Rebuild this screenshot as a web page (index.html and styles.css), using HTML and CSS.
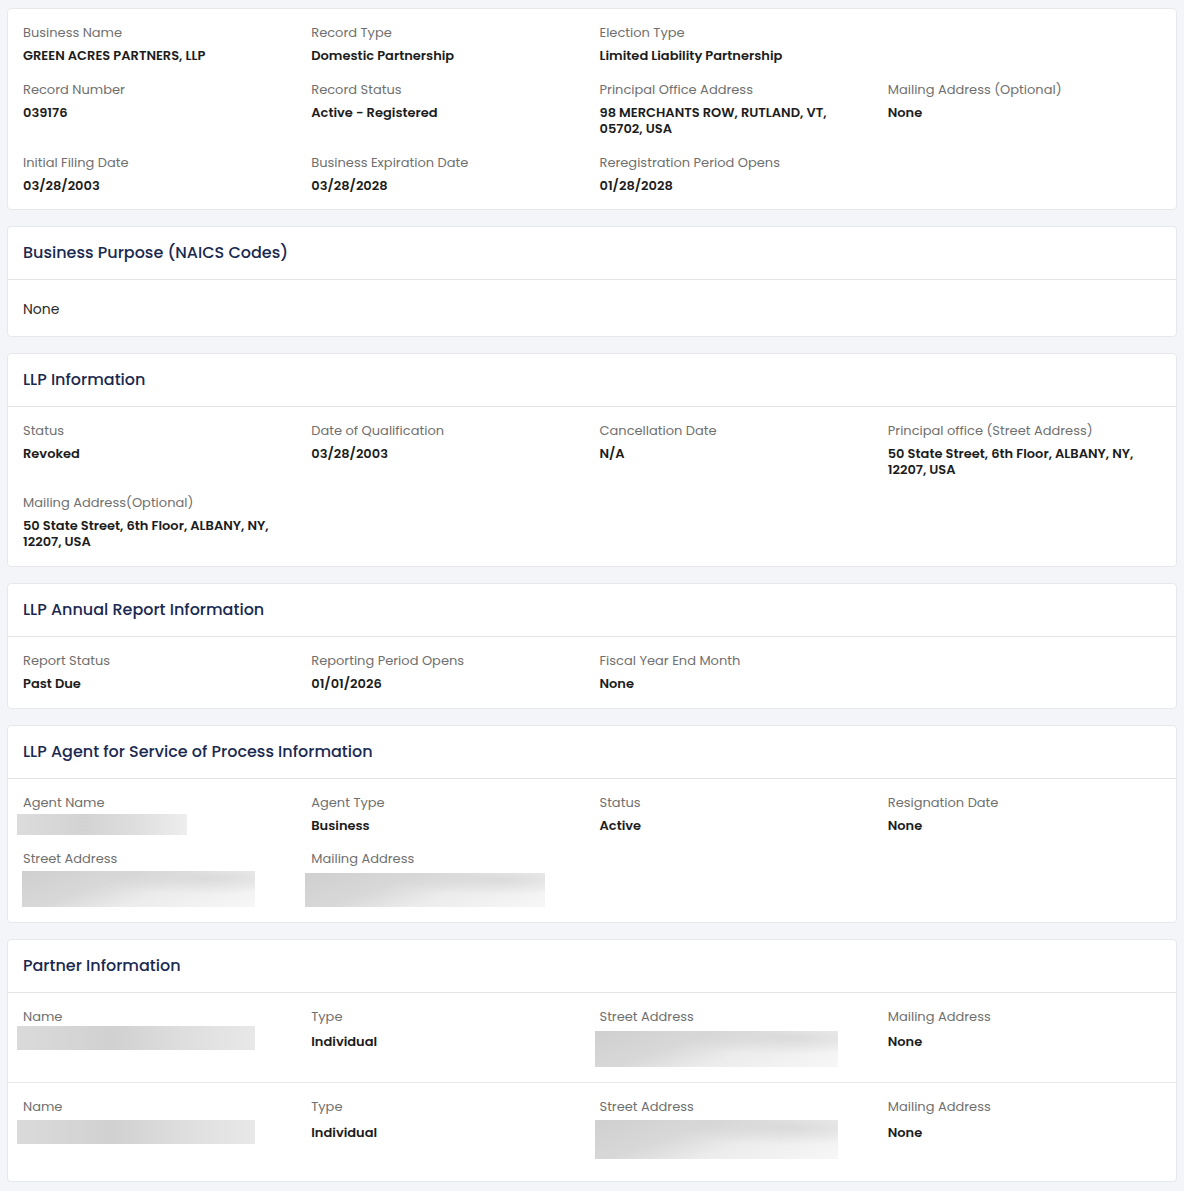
FILE: index.html
```html
<!DOCTYPE html>
<html lang="en">
<head>
    <meta charset="UTF-8">
    <meta name="viewport" content="width=device-width, initial-scale=1.0">
    <title>Business Record - GREEN ACRES PARTNERS, LLP</title>
    <link rel="stylesheet" href="styles.css">
</head>
<body>
    <!-- Record summary -->
    <div class="card">
        <div class="card-body grid summary">
            <div class="field">
                <span class="label">Business Name</span>
                <span class="value">GREEN ACRES PARTNERS, LLP</span>
            </div>
            <div class="field">
                <span class="label">Record Type</span>
                <span class="value">Domestic Partnership</span>
            </div>
            <div class="field">
                <span class="label">Election Type</span>
                <span class="value">Limited Liability Partnership</span>
            </div>
            <div class="field"></div>

            <div class="field">
                <span class="label">Record Number</span>
                <span class="value">039176</span>
            </div>
            <div class="field">
                <span class="label">Record Status</span>
                <span class="value">Active - Registered</span>
            </div>
            <div class="field">
                <span class="label">Principal Office Address</span>
                <span class="value">98 MERCHANTS ROW, RUTLAND, VT, 05702, USA</span>
            </div>
            <div class="field">
                <span class="label">Mailing Address (Optional)</span>
                <span class="value">None</span>
            </div>

            <div class="field">
                <span class="label">Initial Filing Date</span>
                <span class="value">03/28/2003</span>
            </div>
            <div class="field">
                <span class="label">Business Expiration Date</span>
                <span class="value">03/28/2028</span>
            </div>
            <div class="field">
                <span class="label">Reregistration Period Opens</span>
                <span class="value">01/28/2028</span>
            </div>
        </div>
    </div>

    <!-- NAICS codes -->
    <div class="card">
        <div class="card-header">Business Purpose (NAICS Codes)</div>
        <div class="card-body">
            <p class="plain">None</p>
        </div>
    </div>

    <!-- LLP info -->
    <div class="card">
        <div class="card-header">LLP Information</div>
        <div class="card-body grid">
            <div class="field">
                <span class="label">Status</span>
                <span class="value">Revoked</span>
            </div>
            <div class="field">
                <span class="label">Date of Qualification</span>
                <span class="value">03/28/2003</span>
            </div>
            <div class="field">
                <span class="label">Cancellation Date</span>
                <span class="value">N/A</span>
            </div>
            <div class="field">
                <span class="label">Principal office (Street Address)</span>
                <span class="value">50 State Street, 6th Floor, ALBANY, NY, 12207, USA</span>
            </div>
            <div class="field">
                <span class="label">Mailing Address(Optional)</span>
                <span class="value">50 State Street, 6th Floor, ALBANY, NY, 12207, USA</span>
            </div>
        </div>
    </div>

    <!-- Annual report -->
    <div class="card">
        <div class="card-header">LLP Annual Report Information</div>
        <div class="card-body grid">
            <div class="field">
                <span class="label">Report Status</span>
                <span class="value">Past Due</span>
            </div>
            <div class="field">
                <span class="label">Reporting Period Opens</span>
                <span class="value">01/01/2026</span>
            </div>
            <div class="field">
                <span class="label">Fiscal Year End Month</span>
                <span class="value">None</span>
            </div>
        </div>
    </div>

    <!-- Agent -->
    <div class="card">
        <div class="card-header">LLP Agent for Service of Process Information</div>
        <div class="card-body grid">
            <div class="field">
                <span class="label">Agent Name</span>
                <div class="redacted redacted-agent"></div>
            </div>
            <div class="field">
                <span class="label">Agent Type</span>
                <span class="value">Business</span>
            </div>
            <div class="field">
                <span class="label">Status</span>
                <span class="value">Active</span>
            </div>
            <div class="field">
                <span class="label">Resignation Date</span>
                <span class="value">None</span>
            </div>
            <div class="field">
                <span class="label">Street Address</span>
                <div class="redacted redacted-street"></div>
            </div>
            <div class="field">
                <span class="label">Mailing Address</span>
                <div class="redacted redacted-mail"></div>
            </div>
        </div>
    </div>

    <!-- Partners -->
    <div class="card">
        <div class="card-header">Partner Information</div>
        <div class="partner grid">
            <div class="field">
                <span class="label">Name</span>
                <div class="redacted redacted-name"></div>
            </div>
            <div class="field">
                <span class="label">Type</span>
                <span class="value">Individual</span>
            </div>
            <div class="field">
                <span class="label">Street Address</span>
                <div class="redacted redacted-partner"></div>
            </div>
            <div class="field">
                <span class="label">Mailing Address</span>
                <span class="value">None</span>
            </div>
        </div>
        <div class="partner grid">
            <div class="field">
                <span class="label">Name</span>
                <div class="redacted redacted-name"></div>
            </div>
            <div class="field">
                <span class="label">Type</span>
                <span class="value">Individual</span>
            </div>
            <div class="field">
                <span class="label">Street Address</span>
                <div class="redacted redacted-partner"></div>
            </div>
            <div class="field">
                <span class="label">Mailing Address</span>
                <span class="value">None</span>
            </div>
        </div>
    </div>
</body>
</html>
```

FILE: styles.css
```css
/* General Styles */
body {
    font-family: "Poppins", "DejaVu Sans", "Open Sans", sans-serif;
    background-color: #f4f5f9;
    margin: 0;
    padding: 8px 7px;
    color: #1c1c1c;
}

/* Cards */
.card {
    background-color: #ffffff;
    border: 1px solid #e7e8ec;
    border-radius: 4px;
    margin-bottom: 16px;
}

.card-header {
    padding: 14px 15px;
    font-size: 16px;
    line-height: 24px;
    font-weight: 500;
    color: #1a2950;
    border-bottom: 1px solid #e3e4e8;
}

.card-body {
    padding: 15px 0 16px 15px;
}

.plain {
    margin: 2px 0 -1px;
    font-size: 14px;
    line-height: 24px;
    color: #2b2b2b;
}

/* Four column field layout */
.grid {
    display: grid;
    grid-template-columns: repeat(4, 1fr);
    row-gap: 16px;
}

.summary {
    padding-bottom: 15px;
    row-gap: 17px;
}

.field {
    display: flex;
    flex-direction: column;
    padding-right: 28px;
}

.label {
    font-size: 13px;
    line-height: 18px;
    color: #6f6f6f;
    margin-bottom: 6px;
}

.value {
    font-size: 13px;
    line-height: 16px;
    font-weight: 600;
    color: #1c1c1c;
}

/* Partner rows */
.partner {
    padding: 15px 0 15px 15px;
}

.partner + .partner {
    border-top: 1px solid #e7e8ec;
    padding-bottom: 22px;
}

.partner .value {
    margin-top: 2px;
}

.partner + .partner .value {
    margin-top: 3px;
}

/* Blurred out fields */
.redacted {
    margin-left: -6px;
    background:
        radial-gradient(ellipse at 80% 20%, rgba(200, 200, 200, 0.5), rgba(200, 200, 200, 0) 40%),
        linear-gradient(160deg, #cfcfcf 0%, #d8d8d8 35%, #ececec 60%, #f7f7f7 100%);
}

.redacted-agent {
    width: 170px;
    height: 21px;
    margin-top: -4px;
    margin-bottom: -1px;
    background: linear-gradient(90deg, #dcdcdc, #d3d3d3 40%, #dedede 70%, #eeeeee);
}

.redacted-street {
    width: 233px;
    height: 36px;
    margin-top: -3px;
    margin-left: -1px;
    margin-bottom: -1px;
}

.redacted-mail {
    width: 240px;
    height: 34px;
    margin-top: -1px;
    margin-bottom: -1px;
}

.redacted-name {
    width: 238px;
    height: 24px;
    margin-top: -6px;
    background: linear-gradient(90deg, #dadada, #d1d1d1 40%, #dedede 70%, #e8e8e8);
}

.partner + .partner .redacted-name {
    margin-top: -2px;
}

.redacted-partner {
    width: 243px;
    height: 36px;
    margin-left: -5px;
    margin-top: -1px;
}

.partner + .partner .redacted-partner {
    height: 39px;
    margin-top: -2px;
}
```
